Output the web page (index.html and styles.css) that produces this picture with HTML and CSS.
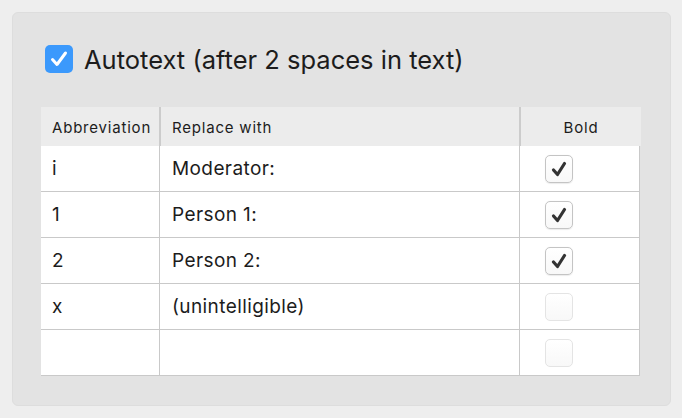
FILE: index.html
```html
<!DOCTYPE html>
<html>

<head>
    <!-- Autotext settings -->
    <title>Autotext</title>
    <link rel="stylesheet" href="styles.css">
</head>

<body>
    <div class="panel">
        <label class="autotext">
            <span class="check-big">
                <svg width="28" height="28" viewBox="0 0 28 28">
                    <path d="M7.5 14.5 L12 19.5 L20.5 8" fill="none" stroke="#fff" stroke-width="3" stroke-linecap="round" stroke-linejoin="round"/>
                </svg>
            </span>
            <span class="autotext-label">Autotext (after 2 spaces in text)</span>
        </label>

        <div class="table">
            <div class="row head">
                <div class="cell">Abbreviation</div>
                <div class="cell">Replace with</div>
                <div class="cell center">Bold</div>
            </div>
            <div class="row">
                <div class="cell">i</div>
                <div class="cell">Moderator:</div>
                <div class="cell"><span class="box on">
                    <svg width="28" height="28" viewBox="0 0 28 28"><path d="M8.5 15 L12.5 19.5 L19.5 8.5" fill="none" stroke="#333" stroke-width="3.2" stroke-linecap="round" stroke-linejoin="round"/></svg>
                </span></div>
            </div>
            <div class="row">
                <div class="cell">1</div>
                <div class="cell">Person 1:</div>
                <div class="cell"><span class="box on">
                    <svg width="28" height="28" viewBox="0 0 28 28"><path d="M8.5 15 L12.5 19.5 L19.5 8.5" fill="none" stroke="#333" stroke-width="3.2" stroke-linecap="round" stroke-linejoin="round"/></svg>
                </span></div>
            </div>
            <div class="row">
                <div class="cell">2</div>
                <div class="cell">Person 2:</div>
                <div class="cell"><span class="box on">
                    <svg width="28" height="28" viewBox="0 0 28 28"><path d="M8.5 15 L12.5 19.5 L19.5 8.5" fill="none" stroke="#333" stroke-width="3.2" stroke-linecap="round" stroke-linejoin="round"/></svg>
                </span></div>
            </div>
            <div class="row">
                <div class="cell">x</div>
                <div class="cell">(unintelligible)</div>
                <div class="cell"><span class="box off"></span></div>
            </div>
            <div class="row">
                <div class="cell"></div>
                <div class="cell"></div>
                <div class="cell"><span class="box off"></span></div>
            </div>
        </div>
    </div>
</body>

</html>
```

FILE: styles.css
```css
* {
    margin: 0px;
    box-sizing: border-box;
}

body {
    background-color: #eeeeee;
    font-family: "Inter", "Liberation Sans", sans-serif;
    color: #1c1c1c;
    padding: 12px 11px 12px 12px;
}

.panel {
    background-color: #e3e3e3;
    border: 1px solid #dddddd;
    border-radius: 6px;
    height: 394px;
    padding: 32px 30px 29px 28px;
}

.autotext {
    display: flex;
    align-items: center;
    gap: 11px;
    margin-left: 4px;
    height: 28px;
    margin-bottom: 34px;
}

.check-big {
    width: 28px;
    height: 28px;
    border-radius: 5px;
    background-color: #3b99fc;
    display: flex;
}

.autotext-label {
    font-size: 25.5px;
}

.table {
    width: 600px;
}

.row {
    display: grid;
    grid-template-columns: 119px 360px 120px;
    height: 46px;
    background-color: #ffffff;
    border-bottom: 1px solid #c9c9c9;
    width: 599px;
}

.row .cell {
    border-right: 1px solid #c9c9c9;
    display: flex;
    align-items: center;
    padding-left: 11px;
    font-size: 19px;
    letter-spacing: 0.4px;
}

.row .cell:nth-child(2) {
    padding-left: 12px;
}

.row .cell:nth-child(3) {
    padding-left: 25px;
}

.head {
    height: 39px;
    width: 600px;
    background-color: #ececec;
    border-bottom: none;
    grid-template-columns: 120px 360px 120px;
}

.head .cell {
    font-size: 15px;
    letter-spacing: 0.8px;
    border-right: 2px solid #cccccc;
    padding-top: 2px;
}

.head .cell:nth-child(2) {
    padding-left: 11px;
}

.head .cell:nth-child(3) {
    border-right: none;
    justify-content: center;
    padding-left: 0px;
}

.box {
    width: 28px;
    height: 28px;
    border-radius: 5px;
    display: flex;
    background: linear-gradient(#ffffff, #f8f8f8);
}

.box.on {
    border: 1px solid #c4c4c4;
    box-shadow: 0 0.5px 1px rgba(0, 0, 0, 0.08);
}

.box.on svg {
    margin: -1px;
}

.box.off {
    border: 1px solid #e4e4e4;
}
```
